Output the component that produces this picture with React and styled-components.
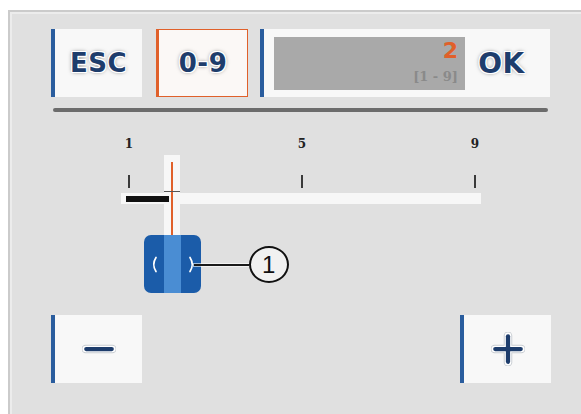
import styled, { createGlobalStyle } from 'styled-components';

const GlobalStyle = createGlobalStyle`
	html, body {
		margin: 0;
		padding: 0;
		background: #ffffff;
		overflow: hidden;
	}
	* {
		box-sizing: border-box;
	}
`;

const BLUE = '#2a5d9e';
const ORANGE = '#e0602a';
const NAVY = '#1e3d6c';

const Page = styled.div`
	width: 581px;
	height: 414px;
	padding: 10px 0 0 8px;
	font-family: 'DejaVu Sans', 'Liberation Sans', sans-serif;
`;

const Panel = styled.div`
	height: 404px;
	background: #e0e0e0;
	border-top: 2px solid #cbcbcb;
	border-left: 2px solid #cbcbcb;
	box-shadow: inset 2px 2px 0 #ececec;
	padding: 17px 30px 0 41px;
`;

const TopBar = styled.div`
	display: flex;
	gap: 14px;
	height: 68px;
`;

const outline = `1px 1px 0 #fff, -1px -1px 0 #fff, 1px -1px 0 #fff, -1px 1px 0 #fff,
	0 1px 0 #fff, 0 -1px 0 #fff, 1px 0 0 #fff, -1px 0 0 #fff, 0 0 4px rgba(0, 0, 0, 0.55)`;

const Key = styled.button`
	width: 91px;
	height: 68px;
	border: none;
	border-left: 4px solid ${BLUE};
	background: #f8f8f8;
	padding: 0;
	display: flex;
	align-items: center;
	justify-content: center;
	font-family: 'DejaVu Sans', sans-serif;
	font-weight: 700;
	font-size: 26px;
	letter-spacing: 0.5px;
	color: ${NAVY};
	text-shadow: ${outline};
`;

const ModeKey = styled(Key)`
	width: 92px;
	border: 1px solid ${ORANGE};
	border-left: 3px solid ${ORANGE};
	background: #fbf8f6;
`;

const EntryKey = styled.div`
	width: 290px;
	height: 68px;
	margin-left: -2px;
	border-left: 4px solid ${BLUE};
	background: #f8f8f8;
	display: flex;
	align-items: center;
	padding-left: 10px;
`;

const Field = styled.div`
	width: 191px;
	height: 53px;
	background: #a9a9a9;
	display: flex;
	flex-direction: column;
	align-items: flex-end;
	padding: 3px 7px 0 0;
`;

const Value = styled.span`
	font-weight: 700;
	font-size: 22px;
	line-height: 22px;
	color: ${ORANGE};
`;

const Range = styled.span`
	margin-top: 7px;
	font-family: 'DejaVu Serif', serif;
	font-weight: 700;
	font-size: 13px;
	line-height: 15px;
	color: #8a8a8a;
`;

const OkLabel = styled.span`
	flex: 1;
	text-align: center;
	padding-right: 12px;
	font-weight: 700;
	font-size: 28px;
	letter-spacing: 0.5px;
	color: ${NAVY};
	text-shadow: ${outline};
`;

const Separator = styled.div`
	margin: 11px 0 0 2px;
	width: 495px;
	height: 4px;
	border-radius: 2px;
	background: #6c6c6c;
`;

const SliderArea = styled.div`
	position: relative;
	display: flow-root;
	margin-left: 70px;
	width: 360px;
	height: 203px;
`;

const ScaleRow = styled.div`
	display: flex;
	justify-content: space-between;
	width: 358px;
	margin-left: 2px;
	margin-top: ${(p) => p.$top}px;
`;

const ScaleLabel = styled.span`
	width: 12px;
	text-align: center;
	font-family: 'DejaVu Serif', serif;
	font-weight: 700;
	font-size: 12px;
	line-height: 14px;
	color: #222;
`;

const TickSlot = styled.span`
	width: 12px;
	height: 13px;
	display: flex;
	justify-content: center;
`;

const Tick = styled.span`
	width: 2px;
	height: 13px;
	background: #3a3a3a;
`;

const Track = styled.div`
	position: relative;
	margin-top: 5px;
	height: 11px;
	background: #f7f7f7;
	display: flex;
	align-items: center;
	padding-left: 5px;
`;

const Fill = styled.div`
	height: 6px;
	background: #111;
`;

const Thumb = styled.div`
	position: absolute;
	top: 43px;
	width: 57px;
	display: flex;
	flex-direction: column;
	align-items: center;
`;

const Glow = styled.div`
	width: 16px;
	height: 80px;
	background: rgba(255, 255, 255, 0.75);
`;

const Handle = styled.div`
	position: relative;
	width: 57px;
	height: 58px;
	border-radius: 7px;
	background: #1b5ca9;
	display: flex;
	align-items: center;
	justify-content: space-between;
	padding: 0 5px 0 6px;
`;

const HandleStripe = styled.div`
	position: absolute;
	left: 20px;
	top: 0;
	width: 17px;
	height: 100%;
	background: #4a8dd3;
`;

const Callout = styled.div`
	position: absolute;
	left: 50px;
	top: 11px;
	display: flex;
	align-items: center;
`;

const CalloutLine = styled.div`
	width: 55px;
	height: 2px;
	background: #1a1a1a;
	box-shadow: 0 0 0 1px rgba(255, 255, 255, 0.6);
`;

const Badge = styled.div`
	width: 40px;
	height: 37px;
	border-radius: 50%;
	border: 2px solid #111;
	background: #f1f1f1;
	display: flex;
	align-items: center;
	justify-content: center;
	font-family: 'Liberation Sans', sans-serif;
	font-size: 24px;
	color: #111;
`;

const Needle = styled.div`
	position: absolute;
	top: 50px;
	width: 2px;
	height: 73px;
	background: ${ORANGE};
	z-index: 2;
`;

const Cross = styled.div`
	position: absolute;
	top: 79px;
	width: 16px;
	height: 1px;
	background: #555;
	z-index: 3;
`;

const BottomRow = styled.div`
	display: flex;
	justify-content: space-between;
	width: 500px;
`;

const Chevron = ({ flip }) => (
	<svg width="8" height="17" viewBox="0 0 8 17" style={{ position: 'relative' }}>
		<path
			d={flip ? 'M2 1.5 Q6.5 8.5 2 15.5' : 'M6 1.5 Q1.5 8.5 6 15.5'}
			fill="none"
			stroke="#fff"
			strokeWidth="1.7"
			strokeLinecap="round"
		/>
	</svg>
);

const StepIcon = ({ plus }) => (
	<svg width="34" height="34" viewBox="0 0 36 36">
		<g stroke="#9aa3ad" strokeWidth="9" strokeLinecap="round" opacity="0.5">
			<path d="M4 18 H32" />
			{plus && <path d="M18 4 V32" />}
		</g>
		<g stroke="#fff" strokeWidth="7" strokeLinecap="round">
			<path d="M4 18 H32" />
			{plus && <path d="M18 4 V32" />}
		</g>
		<g stroke={NAVY} strokeWidth="4.5" strokeLinecap="round">
			<path d="M4.5 18 H31.5" />
			{plus && <path d="M18 4.5 V31.5" />}
		</g>
	</svg>
);

const MIN = 1;
const MAX = 9;
const value = 2;

const App = () => {
	// tick span 346px starting 8px into the track
	const pos = 8 + ((value - MIN) / (MAX - MIN)) * 346;

	return (
		<Page>
			<GlobalStyle />
			<Panel>
				<TopBar>
					<Key>ESC</Key>
					<ModeKey>0-9</ModeKey>
					<EntryKey>
						<Field>
							<Value>{value}</Value>
							<Range>[{MIN} - {MAX}]</Range>
						</Field>
						<OkLabel>OK</OkLabel>
					</EntryKey>
				</TopBar>
				<Separator />
				<SliderArea>
					<Thumb style={{ left: pos - 28.5 }}>
						<Glow />
						<Handle>
							<HandleStripe />
							<Chevron />
							<Chevron flip />
							<Callout>
								<CalloutLine />
								<Badge>1</Badge>
							</Callout>
						</Handle>
					</Thumb>
					<ScaleRow $top={25}>
						<ScaleLabel>1</ScaleLabel>
						<ScaleLabel>5</ScaleLabel>
						<ScaleLabel>9</ScaleLabel>
					</ScaleRow>
					<ScaleRow $top={24}>
						<TickSlot><Tick /></TickSlot>
						<TickSlot><Tick /></TickSlot>
						<TickSlot><Tick /></TickSlot>
					</ScaleRow>
					<Track>
						<Fill style={{ width: pos - 8 }} />
					</Track>
					<Needle style={{ left: pos - 1 }} />
					<Cross style={{ left: pos - 8 }} />
				</SliderArea>
				<BottomRow>
					<Key aria-label="minus">
						<StepIcon />
					</Key>
					<Key aria-label="plus">
						<StepIcon plus />
					</Key>
				</BottomRow>
			</Panel>
		</Page>
	);
};

export default App;
